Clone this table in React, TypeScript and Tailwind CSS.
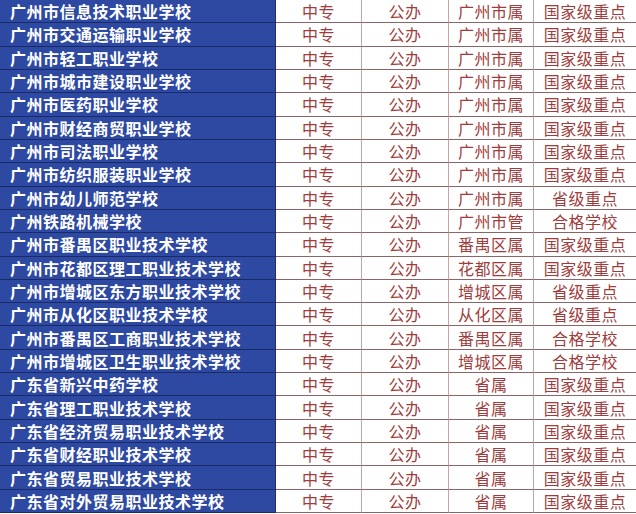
const rows: [string, string, string][] = [
  ['广州市信息技术职业学校', '广州市属', '国家级重点'],
  ['广州市交通运输职业学校', '广州市属', '国家级重点'],
  ['广州市轻工职业学校', '广州市属', '国家级重点'],
  ['广州市城市建设职业学校', '广州市属', '国家级重点'],
  ['广州市医药职业学校', '广州市属', '国家级重点'],
  ['广州市财经商贸职业学校', '广州市属', '国家级重点'],
  ['广州市司法职业学校', '广州市属', '国家级重点'],
  ['广州市纺织服装职业学校', '广州市属', '国家级重点'],
  ['广州市幼儿师范学校', '广州市属', '省级重点'],
  ['广州铁路机械学校', '广州市管', '合格学校'],
  ['广州市番禺区职业技术学校', '番禺区属', '国家级重点'],
  ['广州市花都区理工职业技术学校', '花都区属', '国家级重点'],
  ['广州市增城区东方职业技术学校', '增城区属', '省级重点'],
  ['广州市从化区职业技术学校', '从化区属', '省级重点'],
  ['广州市番禺区工商职业技术学校', '番禺区属', '合格学校'],
  ['广州市增城区卫生职业技术学校', '增城区属', '合格学校'],
  ['广东省新兴中药学校', '省属', '国家级重点'],
  ['广东省理工职业技术学校', '省属', '国家级重点'],
  ['广东省经济贸易职业技术学校', '省属', '国家级重点'],
  ['广东省财经职业技术学校', '省属', '国家级重点'],
  ['广东省贸易职业技术学校', '省属', '国家级重点'],
  ['广东省对外贸易职业技术学校', '省属', '国家级重点'],
];

const cell =
  'flex items-center justify-center border-b border-r border-b-[#8a6666] border-r-[#c9a3a3] text-[#a13c3c] text-[16px] tracking-[0.5px]';

export default function App() {
  return (
    <div
      className="w-[636px] h-[514px] bg-white overflow-hidden"
      style={{ fontFamily: '"Noto Sans CJK SC", "Noto Sans", sans-serif' }}
    >
      <div className="grid grid-cols-[276px_86px_87px_85px_102px] grid-rows-[repeat(22,minmax(0,1fr))] h-[513px]">
        {rows.map(([name, owner, level]) => (
          <div key={name} className="contents">
            <div className="flex items-center pl-[10px] bg-[#2e49a2] border-b border-r border-b-[#1a2a66] border-r-[#1d2f70] text-white font-bold text-[16px] tracking-[0.5px] leading-none">
              {name}
            </div>
            <div className={cell}>中专</div>
            <div className={cell}>公办</div>
            <div className={cell}>{owner}</div>
            <div className={cell + ' border-r-0'}>{level}</div>
          </div>
        ))}
      </div>
    </div>
  );
}
